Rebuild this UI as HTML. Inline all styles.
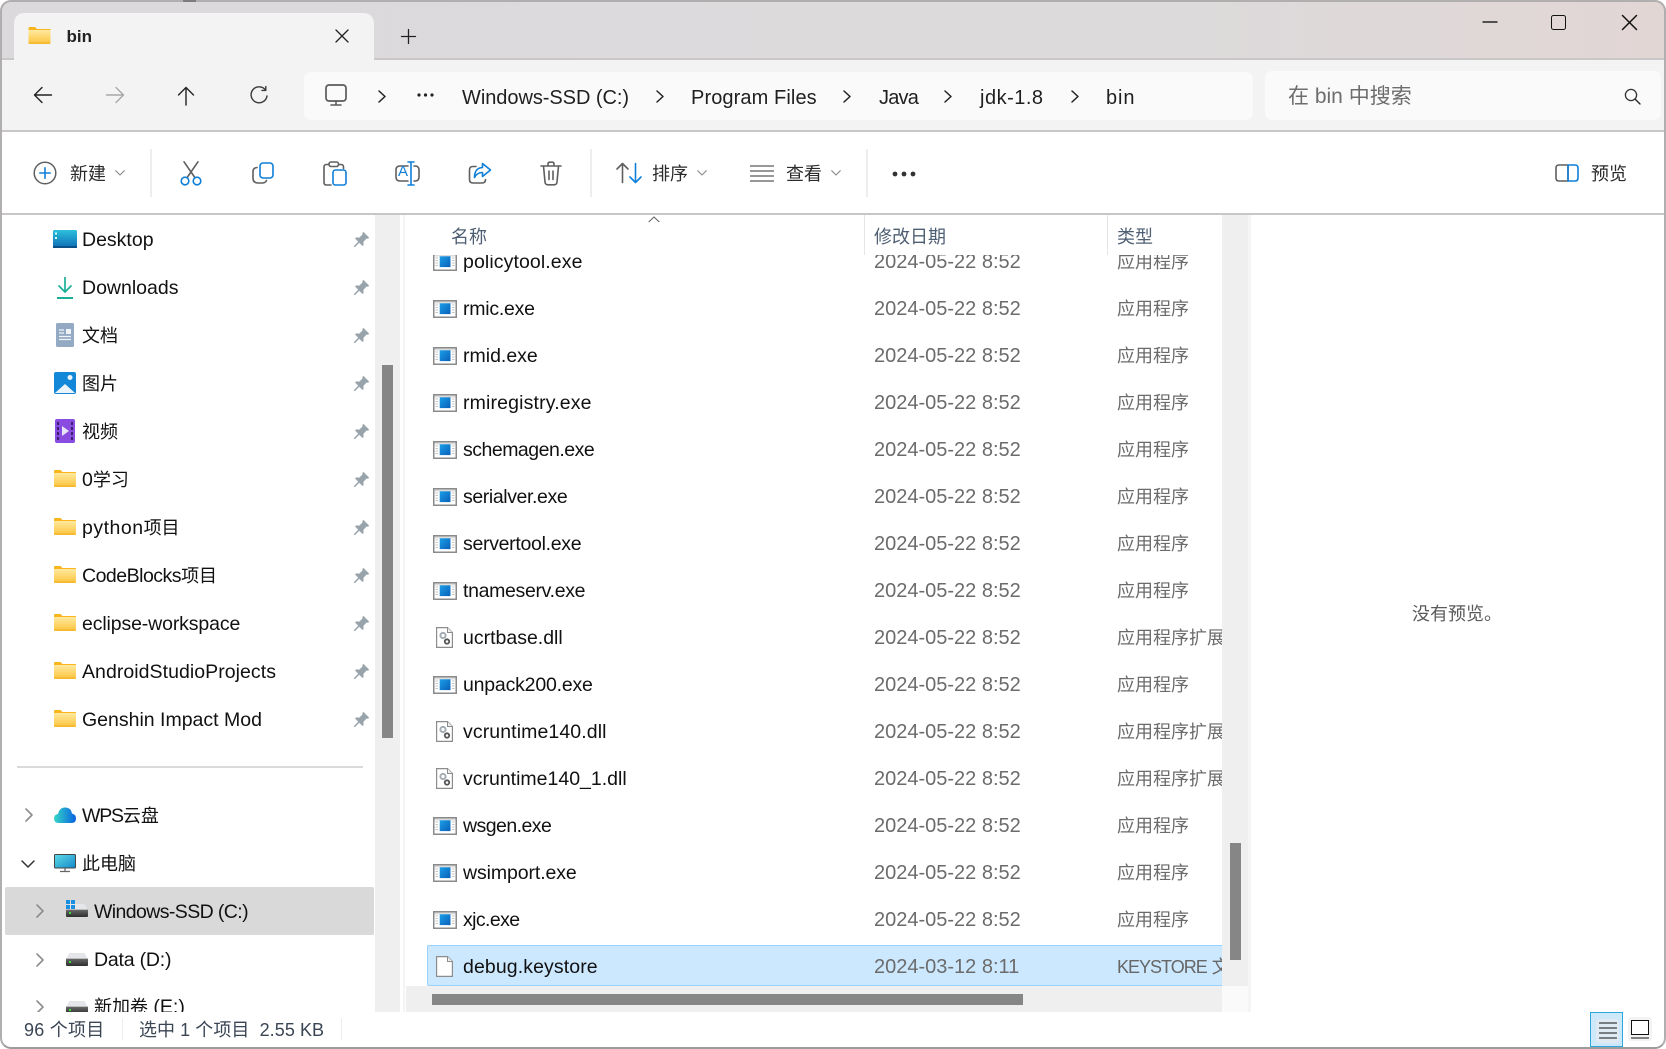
<!DOCTYPE html>
<html lang="zh"><head><meta charset="utf-8"><title>bin</title>
<style>
*{box-sizing:border-box;margin:0;padding:0}
html,body{width:1666px;height:1049px;overflow:hidden;background:#fff}
body{position:relative;font-family:"Liberation Sans","Noto Sans CJK SC",sans-serif;color:#1a1a1a}
.a{position:absolute}
.t{position:absolute;white-space:nowrap;line-height:24px;height:24px}
svg{position:absolute;overflow:visible;display:block}
.c{font-size:18px;letter-spacing:0}
.nav{font-size:19.5px;color:#111;margin-top:1px}
.bc{font-size:20px;color:#1f1f1f;top:86px}
.tb{font-size:18px;color:#2b2b2b;top:162px}
.ln{fill:none;stroke:#5f5f5f;stroke-width:1.6;stroke-linecap:round;stroke-linejoin:round}
.bl{fill:none;stroke:#0f7fd8;stroke-width:1.6;stroke-linecap:round;stroke-linejoin:round}
.dk{fill:none;stroke:#222;stroke-width:1.5;stroke-linecap:round;stroke-linejoin:round}
.ch{fill:none;stroke:#8d8d8d;stroke-width:1.6;stroke-linecap:round;stroke-linejoin:round}
#rows{position:absolute;left:406px;top:255px;width:816px;height:731px;overflow:hidden}
.r{position:relative;height:47px;line-height:47px;white-space:nowrap}
.r svg{left:27px;top:14px;width:24px;height:18px}
.r svg.d{left:30px;top:12px;width:17px;height:21px}
.r b{position:absolute;left:57px;font-weight:400;font-size:19.5px;color:#111}
.r i{position:absolute;left:468px;font-style:normal;font-size:20px;color:#6b6b6b}
.r u{position:absolute;left:711px;text-decoration:none;font-size:18px;color:#6b6b6b}
</style></head><body>
<svg width="0" height="0" style="position:absolute">
<defs>
<linearGradient id="fg" x1="0" y1="0" x2="0" y2="1"><stop offset="0" stop-color="#ffe9a0"/><stop offset="1" stop-color="#fcc43c"/></linearGradient>
<linearGradient id="bs" x1="0" y1="0" x2="1" y2="1"><stop offset="0" stop-color="#1b9ee8"/><stop offset="1" stop-color="#0a60b8"/></linearGradient>
<linearGradient id="dg" x1="0" y1="0" x2="0" y2="1"><stop offset="0" stop-color="#2cc0dc"/><stop offset="1" stop-color="#0f6cb4"/></linearGradient>
<linearGradient id="pc" x1="0" y1="0" x2="1" y2="1"><stop offset="0" stop-color="#5fdce8"/><stop offset="1" stop-color="#1488c8"/></linearGradient>
<linearGradient id="cl" x1="0" y1="0" x2="1" y2="0"><stop offset="0" stop-color="#34d6c6"/><stop offset="1" stop-color="#0a62e0"/></linearGradient>
<linearGradient id="dv" x1="0" y1="0" x2="0" y2="1"><stop offset="0" stop-color="#6a6a6a"/><stop offset="1" stop-color="#2e2e2e"/></linearGradient>
<symbol id="folder" viewBox="0 0 22 17"><path d="M0 1.2Q0 0 1.2 0H6.5L8.5 2H22V4H0Z" fill="#f7b51e"/><path d="M0 3H22V15.8Q22 17 20.8 17H1.2Q0 17 0 15.8Z" fill="url(#fg)"/><path d="M0 16H22" stroke="#f0b020" stroke-width="1"/></symbol>
<symbol id="exe" viewBox="0 0 24 18"><rect x=".75" y=".75" width="22.5" height="16.5" fill="#fff" stroke="#8a8a8a" stroke-width="1.5"/><rect x="1.5" y="1.5" width="21" height="2" fill="#dcdcdc"/><rect x="6.7" y="3.3" width="10.8" height="10.8" fill="url(#bs)"/><path d="M2.5 5H5M2.5 7.5H5M2.5 10H5M2.5 12.5H5M19 5H21.5M19 7.5H21.5M19 10H21.5M19 12.5H21.5" stroke="#c4c4c4" stroke-width="1"/></symbol>
<symbol id="dll" viewBox="0 0 17 21"><path d="M.6.6H11.5L16.4 5.5V20.4H.6Z" fill="#fff" stroke="#8c8c8c" stroke-width="1.2"/><path d="M11.5.6V5.5H16.4" fill="#eee" stroke="#8c8c8c" stroke-width="1"/><circle cx="7" cy="8.5" r="2.6" fill="none" stroke="#a3abb3" stroke-width="2"/><circle cx="11" cy="14.5" r="2.2" fill="none" stroke="#555" stroke-width="1.8"/></symbol>
<symbol id="pin" viewBox="0 0 16 16"><path d="M9.8.8L15.2 6.2 14 7.3 13 6.9 9.8 10.1 10 13 8.9 14.1 5.9 11.1 1.7 15.3.7 14.3 4.9 10.1 1.9 7.1 3 6 5.9 6.2 9.1 3 8.7 2Z" fill="#98a3ab"/></symbol>
<symbol id="drive" viewBox="0 0 22 13"><path d="M3.5 0H18.5L22 6H0Z" fill="#e4e6ea"/><rect x="0" y="5.5" width="22" height="7.5" rx="1" fill="url(#dv)"/><rect x="0" y="5" width="22" height="1" fill="#bdbdbd"/><rect x="3" y="8" width="2" height="2" fill="#3ddc3d"/></symbol>
</defs></svg>

<!-- title bar -->
<div class="a" style="left:0;top:0;width:1666px;height:60px;background:linear-gradient(90deg,#dbd9dc 0,#dcdadb 70%,#e2d6d5 100%)"></div>
<div class="a" style="left:0;top:58px;width:1666px;height:2px;background:#c9c7c7"></div>
<div class="a" style="left:14px;top:13px;width:360px;height:47px;background:#f4f3f4;border-radius:10px 10px 0 0"></div>
<svg style="left:28px;top:27px;width:23px;height:17px"><use href="#folder" width="23" height="17"/></svg>
<div class="t" style="left:66.500px;top:25px;font-size:17px;font-weight:700;color:#222">bin</div>
<svg style="left:335px;top:29px;width:14px;height:14px"><path d="M1 1L13 13M13 1L1 13" class="dk" style="stroke-width:1.3"/></svg>
<svg style="left:401px;top:29px;width:15px;height:15px"><path d="M7.5 .5V14.5M.5 7.5H14.5" class="dk" style="stroke-width:1.3"/></svg>
<svg style="left:1482px;top:20px;width:16px;height:4px"><path d="M.5 2H15.5" class="dk" style="stroke-linecap:butt"/></svg>
<div class="a" style="left:1551px;top:15px;width:15px;height:15px;border:1.8px solid #111;border-radius:2.5px"></div>
<svg style="left:1622px;top:15px;width:15px;height:15px"><path d="M.5 .5L14.5 14.5M14.5 .5L.5 14.5" class="dk" style="stroke:#111"/></svg>

<!-- nav row -->
<div class="a" style="left:0;top:60px;width:1666px;height:70px;background:#f3f3f3"></div>
<div class="a" style="left:0;top:130px;width:1666px;height:2px;background:#c9c6c6"></div>
<svg style="left:33px;top:86px;width:20px;height:18px"><path d="M18.5 9H1.5M9 1.5L1.5 9 9 16.5" class="dk" style="stroke-width:1.4"/></svg>
<svg style="left:105px;top:86px;width:20px;height:18px"><path d="M1.5 9H18.5M11 1.5L18.5 9 11 16.5" class="dk" style="stroke:#a8a8a8;stroke-width:1.4"/></svg>
<svg style="left:177px;top:86px;width:18px;height:20px"><path d="M9 19V1.5M1.5 9L9 1.5 16.5 9" class="dk" style="stroke-width:1.4"/></svg>
<svg style="left:250px;top:86px;width:18px;height:19px"><path d="M15.5 4A8 8 0 1 0 17 10" class="dk" style="stroke:#3a3a3a;stroke-width:1.4"/><path d="M15.8 .6V4.4H12" class="dk" style="stroke:#3a3a3a;stroke-width:1.4"/></svg>

<div class="a" style="left:304px;top:72px;width:949px;height:48px;background:#fafafa;border-radius:7px"></div>
<svg style="left:325px;top:84px;width:22px;height:22px"><rect x="1" y="1" width="20" height="16" rx="3" fill="none" stroke="#5a5a5a" stroke-width="1.7"/><path d="M11 17V20M6 21H16" class="ln" style="stroke:#5a5a5a"/></svg>
<svg class="cv" style="left:378px;top:90px;width:8px;height:13px"><path d="M1 1L7 6.5 1 12" class="dk"/></svg>
<svg style="left:417px;top:93px;width:17px;height:4px"><circle cx="2" cy="2" r="1.6" fill="#222"/><circle cx="8.5" cy="2" r="1.6" fill="#222"/><circle cx="15" cy="2" r="1.6" fill="#222"/></svg>
<div class="t bc" style="left:462px;letter-spacing:-.05px">Windows-SSD (C:)</div>
<svg style="left:656px;top:90px;width:8px;height:13px"><path d="M1 1L7 6.5 1 12" class="dk"/></svg>
<div class="t bc" style="left:691px;letter-spacing:.1px">Program Files</div>
<svg style="left:843px;top:90px;width:8px;height:13px"><path d="M1 1L7 6.5 1 12" class="dk"/></svg>
<div class="t bc" style="left:879px;letter-spacing:-.8px">Java</div>
<svg style="left:944px;top:90px;width:8px;height:13px"><path d="M1 1L7 6.5 1 12" class="dk"/></svg>
<div class="t bc" style="left:980px;letter-spacing:.5px">jdk-1.8</div>
<svg style="left:1071px;top:90px;width:8px;height:13px"><path d="M1 1L7 6.5 1 12" class="dk"/></svg>
<div class="t bc" style="left:1106px;letter-spacing:.9px">bin</div>

<div class="a" style="left:1265px;top:71px;width:396px;height:49px;background:#fafafa;border-radius:7px"></div>
<div class="t" style="left:1288px;top:85px;font-size:21px;color:#6d6d6d">在 bin 中搜索</div>
<svg style="left:1624px;top:88px;width:17px;height:17px"><circle cx="7" cy="7" r="5.6" fill="none" stroke="#333" stroke-width="1.3"/><path d="M11 11L16 16" class="dk" style="stroke-width:1.3"/></svg>

<!-- toolbar -->
<div class="a" style="left:0;top:213px;width:1666px;height:2px;background:#c9c6c6"></div>
<div class="a" style="left:150px;top:149px;width:2px;height:48px;background:#eeeeee"></div>
<div class="a" style="left:590px;top:149px;width:2px;height:48px;background:#eeeeee"></div>
<div class="a" style="left:866px;top:149px;width:2px;height:48px;background:#eeeeee"></div>

<svg style="left:33px;top:161px;width:24px;height:24px"><circle cx="12" cy="12" r="10.8" class="ln" style="stroke-width:1.5"/><path d="M12 6.8V17.2M6.8 12H17.2" class="bl"/></svg>
<div class="t tb" style="left:70px">新建</div>
<svg style="left:115px;top:170px;width:10px;height:6px"><path d="M.7 .7L5 5 9.3 .7" class="ch" style="stroke-width:1.1"/></svg>

<svg style="left:180px;top:161px;width:22px;height:25px"><path d="M4 .8L14.5 16M18 .8L7.5 16" class="ln"/><circle cx="5" cy="20" r="3.8" class="bl"/><circle cx="17" cy="20" r="3.8" class="bl"/></svg>
<svg style="left:252px;top:162px;width:22px;height:22px"><rect x="8" y="1" width="13" height="15" rx="3" class="bl"/><path d="M5 5.5Q1 6 1 9.5V16Q1 21 6 21H10Q13.5 21 14.5 18.5" class="ln"/></svg>
<svg style="left:323px;top:161px;width:24px;height:25px"><path d="M5.5 3.5H3.5Q1 3.5 1 6V21.5Q1 24 3.5 24H8M16 3.5H18Q20.5 3.5 20.5 6V7.5" class="ln"/><rect x="6" y="1" width="9.5" height="4.5" rx="2" class="ln"/><rect x="10" y="9" width="13" height="15" rx="2.5" class="bl"/></svg>
<svg style="left:395px;top:161px;width:25px;height:25px"><path d="M13 5H5Q1 5 1 9V16Q1 20 5 20H13M19 5H20Q24 5 24 9V16Q24 20 20 20H19" class="ln"/><path d="M16 1V24M13 1H19M13 24H19" class="bl"/></svg>
<div class="t" style="left:398px;top:160px;font-size:15px;color:#0f7fd8">A</div>
<svg style="left:468px;top:162px;width:24px;height:22px"><path d="M8 4.5H5Q1.5 4.5 1.5 8V17.5Q1.5 21 5 21H14Q17.5 21 17.5 17.5" class="ln"/><path d="M14.5 1.5L22.5 8 14.5 14.5V10.5Q9 10.5 6.5 15.5 6.5 6 14.5 5.5Z" class="bl"/></svg>
<svg style="left:540px;top:161px;width:22px;height:25px"><path d="M1 5H21M8 5V3Q8 1.2 9.8 1.2H12.2Q14 1.2 14 3V5M3.5 5L5 21Q5.2 23.8 8 23.8H14Q16.8 23.8 17 21L18.5 5M9 10V18.5M13 10V18.5" class="ln"/></svg>

<svg style="left:616px;top:162px;width:27px;height:22px"><path d="M6.5 20.5V1.500M1 7L6.500 1.500 12 7" class="ln"/><path d="M19.500 1.500V20.500M14 15L19.500 20.500 25 15" class="bl"/></svg>
<div class="t tb" style="left:652px">排序</div>
<svg style="left:697px;top:170px;width:10px;height:6px"><path d="M.7 .7L5 5 9.3 .7" class="ch" style="stroke-width:1.1"/></svg>
<svg style="left:750px;top:165px;width:24px;height:17px"><path d="M0 1H24M0 6H24M0 11H24M0 16H24" stroke="#5a5a5a" stroke-width="1.3" fill="none"/></svg>
<div class="t tb" style="left:786px">查看</div>
<svg style="left:831px;top:170px;width:10px;height:6px"><path d="M.7 .7L5 5 9.3 .7" class="ch" style="stroke-width:1.1"/></svg>
<svg style="left:892px;top:171px;width:24px;height:6px"><circle cx="3" cy="3" r="2.4" fill="#333"/><circle cx="12" cy="3" r="2.4" fill="#333"/><circle cx="21" cy="3" r="2.4" fill="#333"/></svg>
<svg style="left:1555px;top:164px;width:24px;height:18px"><path d="M13 1H4Q1 1 1 4V14Q1 17 4 17H13Z" class="ln"/><path d="M13 1H20Q23 1 23 4V14Q23 17 20 17H13Z" class="bl"/></svg>
<div class="t tb" style="left:1591px">预览</div>

<!-- sidebar -->
<div class="a" style="left:375px;top:215px;width:25px;height:797px;background:#efefef"></div>
<div class="a" style="left:382px;top:365px;width:11px;height:373px;background:#868686"></div>
<div class="a" style="left:403px;top:215px;width:2px;height:797px;background:#f4f4f4"></div>

<svg style="left:53px;top:230px;width:24px;height:18px"><rect width="24" height="18" rx="1.5" fill="url(#dg)"/><path d="M0 17H24" stroke="#0a4f86" stroke-width="2"/><rect x="2" y="2.5" width="2" height="2" fill="#dff"/><rect x="2" y="7" width="2" height="2" fill="#dff"/></svg>
<div class="t nav" style="left:82px;top:227px">Desktop</div>
<svg style="left:57px;top:276px;width:16px;height:23px"><path d="M8 1V16M1.5 9.5L8 16 14.5 9.5" fill="none" stroke="#1bb096" stroke-width="1.7"/><path d="M0 22H16" stroke="#1bb096" stroke-width="2"/></svg>
<div class="t nav" style="left:82px;top:275px">Downloads</div>
<svg style="left:56px;top:323px;width:18px;height:24px"><rect width="18" height="24" rx="1.5" fill="#94aac4"/><rect x="10" y="6" width="5" height="5" fill="#eef3f8"/><path d="M3 7H8M3 10H8M3 13.5H15M3 16.5H15" stroke="#eef3f8" stroke-width="1.2"/></svg>
<div class="t nav" style="left:82px;top:323px"><span class="c">文档</span></div>
<svg style="left:54px;top:372px;width:22px;height:22px"><rect width="22" height="22" rx="2" fill="#1488d8"/><path d="M1 21L11 12 21 21Z" fill="#eaf4fb"/><circle cx="16" cy="5.5" r="2.5" fill="#eaf4fb"/></svg>
<div class="t nav" style="left:82px;top:371px"><span class="c">图片</span></div>
<svg style="left:55px;top:419px;width:20px;height:24px"><rect width="20" height="24" rx="2" fill="#8a4be0"/><path d="M2 3h2v3H2zM2 8h2v3H2zM2 13h2v3H2zM2 18h2v3H2zM16 3h2v3h-2zM16 8h2v3h-2zM16 13h2v3h-2zM16 18h2v3h-2z" fill="#3c2070"/><path d="M7 7L14 12 7 17Z" fill="#e8e4f8"/></svg>
<div class="t nav" style="left:82px;top:419px"><span class="c">视频</span></div>
<svg style="left:54px;top:470px;width:22px;height:17px"><use href="#folder" width="22" height="17"/></svg>
<div class="t nav" style="left:82px;top:467px">0<span class="c">学习</span></div>
<svg style="left:54px;top:518px;width:22px;height:17px"><use href="#folder" width="22" height="17"/></svg>
<div class="t nav" style="left:82px;top:515px;letter-spacing:.5px">python<span class="c">项目</span></div>
<svg style="left:54px;top:566px;width:22px;height:17px"><use href="#folder" width="22" height="17"/></svg>
<div class="t nav" style="left:82px;top:563px;letter-spacing:-.5px">CodeBlocks<span class="c">项目</span></div>
<svg style="left:54px;top:614px;width:22px;height:17px"><use href="#folder" width="22" height="17"/></svg>
<div class="t nav" style="left:82px;top:611px;letter-spacing:-.13px">eclipse-workspace</div>
<svg style="left:54px;top:662px;width:22px;height:17px"><use href="#folder" width="22" height="17"/></svg>
<div class="t nav" style="left:82px;top:659px;letter-spacing:.05px">AndroidStudioProjects</div>
<svg style="left:54px;top:710px;width:22px;height:17px"><use href="#folder" width="22" height="17"/></svg>
<div class="t nav" style="left:82px;top:707px">Genshin Impact Mod</div>

<svg style="left:353px;top:231px;width:17px;height:17px"><use href="#pin" width="17" height="17"/></svg>
<svg style="left:353px;top:279px;width:17px;height:17px"><use href="#pin" width="17" height="17"/></svg>
<svg style="left:353px;top:327px;width:17px;height:17px"><use href="#pin" width="17" height="17"/></svg>
<svg style="left:353px;top:375px;width:17px;height:17px"><use href="#pin" width="17" height="17"/></svg>
<svg style="left:353px;top:423px;width:17px;height:17px"><use href="#pin" width="17" height="17"/></svg>
<svg style="left:353px;top:471px;width:17px;height:17px"><use href="#pin" width="17" height="17"/></svg>
<svg style="left:353px;top:519px;width:17px;height:17px"><use href="#pin" width="17" height="17"/></svg>
<svg style="left:353px;top:567px;width:17px;height:17px"><use href="#pin" width="17" height="17"/></svg>
<svg style="left:353px;top:615px;width:17px;height:17px"><use href="#pin" width="17" height="17"/></svg>
<svg style="left:353px;top:663px;width:17px;height:17px"><use href="#pin" width="17" height="17"/></svg>
<svg style="left:353px;top:711px;width:17px;height:17px"><use href="#pin" width="17" height="17"/></svg>

<div class="a" style="left:17px;top:766px;width:346px;height:2px;background:#dadada"></div>

<svg style="left:25px;top:808px;width:8px;height:14px"><path d="M1 1L7 7 1 13" class="ch"/></svg>
<svg style="left:54px;top:807px;width:22px;height:16px"><path d="M5 16Q0 16 0 11.5 0 7.5 4 7 5.500 0 12 .5 17 1 18 6.5 22 7.5 22 11.5 22 16 17.5 16Z" fill="url(#cl)"/></svg>
<div class="t nav" style="left:82px;top:803px;letter-spacing:-1.2px">WPS<span class="c">云盘</span></div>
<svg style="left:21px;top:860px;width:14px;height:8px"><path d="M1 1L7 7 13 1" class="dk" style="stroke:#333"/></svg>
<svg style="left:54px;top:854px;width:22px;height:18px"><rect x=".5" y=".5" width="21" height="13.500" rx="1" fill="url(#pc)" stroke="#444"/><path d="M11 14V17M6 17.500H16" stroke="#666" stroke-width="1.3"/></svg>
<div class="t nav" style="left:82px;top:851px"><span class="c">此电脑</span></div>

<div class="a" style="left:5px;top:887px;width:369px;height:48px;background:#d9d9d9;border-radius:2px"></div>
<svg style="left:36px;top:904px;width:8px;height:14px"><path d="M1 1L7 7 1 13" class="ch"/></svg>
<svg style="left:66px;top:904px;width:22px;height:13px"><use href="#drive" width="22" height="13"/></svg>
<svg style="left:66px;top:900px;width:9px;height:9px"><rect width="4" height="4" fill="#1a8fe0"/><rect x="5" width="4" height="4" fill="#1a8fe0"/><rect y="5" width="4" height="4" fill="#1a8fe0"/><rect x="5" y="5" width="4" height="4" fill="#1a8fe0"/></svg>
<div class="t nav" style="left:94px;top:899px;letter-spacing:-.6px">Windows-SSD (C:)</div>
<svg style="left:36px;top:953px;width:8px;height:14px"><path d="M1 1L7 7 1 13" class="ch"/></svg>
<svg style="left:66px;top:953px;width:22px;height:13px"><use href="#drive" width="22" height="13"/></svg>
<div class="t nav" style="left:94px;top:947px;letter-spacing:-.2px">Data (D:)</div>
<svg style="left:36px;top:1000px;width:8px;height:14px"><path d="M1 1L7 7 1 13" class="ch"/></svg>
<svg style="left:66px;top:1001px;width:22px;height:13px"><use href="#drive" width="22" height="13"/></svg>
<div class="t nav" style="left:94px;top:994px"><span class="c">新加卷</span> (E:)</div>

<!-- file pane -->
<div class="t" style="left:451px;top:224.500px;font-size:18px;color:#4e5f73">名称</div>
<svg style="left:648px;top:216px;width:12px;height:7px"><path d="M.7 6L6 1 11.300 6" fill="none" stroke="#666" stroke-width="1.1"/></svg>
<div class="a" style="left:864px;top:215px;width:1px;height:40px;background:#e5e5e5"></div>
<div class="t" style="left:874px;top:224.500px;font-size:18px;color:#4e5f73">修改日期</div>
<div class="a" style="left:1107px;top:215px;width:1px;height:40px;background:#e5e5e5"></div>
<div class="t" style="left:1117px;top:224.500px;font-size:18px;color:#4e5f73">类型</div>

<div class="a" style="left:427px;top:945px;width:795px;height:41px;background:#cce8ff;border:1px solid #99d1ff;border-right:0;border-radius:2px 0 0 2px"></div>
<div id="rows"><div style="height:0;margin-top:-16.500px"></div>
<div class="r"><svg><use href="#exe" width="24" height="18"/></svg><b style="letter-spacing:.1px">policytool.exe</b><i>2024-05-22 8:52</i><u>应用程序</u></div>
<div class="r"><svg><use href="#exe" width="24" height="18"/></svg><b style="letter-spacing:-.25px">rmic.exe</b><i>2024-05-22 8:52</i><u>应用程序</u></div>
<div class="r"><svg><use href="#exe" width="24" height="18"/></svg><b>rmid.exe</b><i>2024-05-22 8:52</i><u>应用程序</u></div>
<div class="r"><svg><use href="#exe" width="24" height="18"/></svg><b style="letter-spacing:.15px">rmiregistry.exe</b><i>2024-05-22 8:52</i><u>应用程序</u></div>
<div class="r"><svg><use href="#exe" width="24" height="18"/></svg><b style="letter-spacing:-.5px">schemagen.exe</b><i>2024-05-22 8:52</i><u>应用程序</u></div>
<div class="r"><svg><use href="#exe" width="24" height="18"/></svg><b style="letter-spacing:-.4px">serialver.exe</b><i>2024-05-22 8:52</i><u>应用程序</u></div>
<div class="r"><svg><use href="#exe" width="24" height="18"/></svg><b style="letter-spacing:-.3px">servertool.exe</b><i>2024-05-22 8:52</i><u>应用程序</u></div>
<div class="r"><svg><use href="#exe" width="24" height="18"/></svg><b style="letter-spacing:-.33px">tnameserv.exe</b><i>2024-05-22 8:52</i><u>应用程序</u></div>
<div class="r"><svg class="d"><use href="#dll" width="17" height="21"/></svg><b>ucrtbase.dll</b><i>2024-05-22 8:52</i><u>应用程序扩展</u></div>
<div class="r"><svg><use href="#exe" width="24" height="18"/></svg><b style="letter-spacing:-.2px">unpack200.exe</b><i>2024-05-22 8:52</i><u>应用程序</u></div>
<div class="r"><svg class="d"><use href="#dll" width="17" height="21"/></svg><b style="letter-spacing:.1px">vcruntime140.dll</b><i>2024-05-22 8:52</i><u>应用程序扩展</u></div>
<div class="r"><svg class="d"><use href="#dll" width="17" height="21"/></svg><b>vcruntime140_1.dll</b><i>2024-05-22 8:52</i><u>应用程序扩展</u></div>
<div class="r"><svg><use href="#exe" width="24" height="18"/></svg><b style="letter-spacing:-.55px">wsgen.exe</b><i>2024-05-22 8:52</i><u>应用程序</u></div>
<div class="r"><svg><use href="#exe" width="24" height="18"/></svg><b style="letter-spacing:-.1px">wsimport.exe</b><i>2024-05-22 8:52</i><u>应用程序</u></div>
<div class="r"><svg><use href="#exe" width="24" height="18"/></svg><b style="letter-spacing:-.6px">xjc.exe</b><i>2024-05-22 8:52</i><u>应用程序</u></div>
<div class="r"><svg class="d" viewBox="0 0 17 21"><path d="M.6.6H11.500L16.400 5.500V20.400H.6Z" fill="#fff" stroke="#8c8c8c" stroke-width="1.2"/><path d="M11.500.6V5.500H16.400" fill="#eee" stroke="#8c8c8c" stroke-width="1"/></svg><b style="letter-spacing:.1px">debug.keystore</b><i>2024-03-12 8:11</i><u style="color:#666"><span style="letter-spacing:-1px">KEYSTORE</span> 文件</u></div>
</div>

<div class="a" style="left:406px;top:986px;width:816px;height:26px;background:#efefef"></div>
<div class="a" style="left:432px;top:994px;width:591px;height:11px;background:#868686"></div>
<div class="a" style="left:1222px;top:215px;width:26px;height:771px;background:#efefef"></div>
<div class="a" style="left:1230px;top:843px;width:11px;height:117px;background:#868686"></div>
<div class="a" style="left:1222px;top:986px;width:26px;height:26px;background:#fafafa"></div>
<div class="a" style="left:1248px;top:215px;width:3px;height:797px;background:#f5f5f5"></div>

<!-- preview -->
<div class="t" style="left:1412px;top:602px;font-size:18px;color:#5a5a5a">没有预览。</div>

<!-- status -->
<div class="a" style="left:0;top:1012px;width:1666px;height:37px;background:#fff"></div>
<div class="t" style="left:24px;top:1018px;font-size:18px;color:#3b4654;letter-spacing:.25px">96 个项目</div>
<div class="a" style="left:122px;top:1018px;width:1px;height:22px;background:#eeeeee"></div>
<div class="t" style="left:139px;top:1018px;font-size:18px;color:#3b4654;letter-spacing:.06px">选中 1 个项目&nbsp; 2.55 KB</div>
<div class="a" style="left:341px;top:1018px;width:1px;height:22px;background:#eeeeee"></div>

<div class="a" style="left:1590px;top:1012px;width:33px;height:35px;background:#cde8f8;border:1px solid #2ea6e0"></div>
<div class="a" style="left:1596px;top:1019px;width:23px;height:24px;background:#dfeaf3;border-radius:3px"></div>
<svg style="left:1599px;top:1022px;width:18px;height:18px"><path d="M0 1H18M0 6H18M0 11H18M0 16H18" stroke="#111" stroke-width="1.1"/></svg>
<div class="a" style="left:1628px;top:1017px;width:24px;height:24px;background:#f3f3f3;border-radius:3px"></div>
<div class="a" style="left:1631px;top:1020px;width:18px;height:15px;border:1.2px solid #111;background:#fff"></div>
<svg style="left:1631px;top:1037px;width:18px;height:2px"><path d="M0 1H18" stroke="#111" stroke-width="1.1"/></svg>

<!-- window frame -->
<div class="a" style="left:0;top:0;width:1666px;height:1049px;border:2px solid #b0aeae;border-bottom-color:#9c9c9c;border-radius:11px;box-shadow:0 0 0 12px #fff;clip-path:inset(0 0 0 0);pointer-events:none"></div>
<div class="a" style="left:183px;top:0;width:13px;height:2px;background:#7d7d7d"></div>
</body></html>
